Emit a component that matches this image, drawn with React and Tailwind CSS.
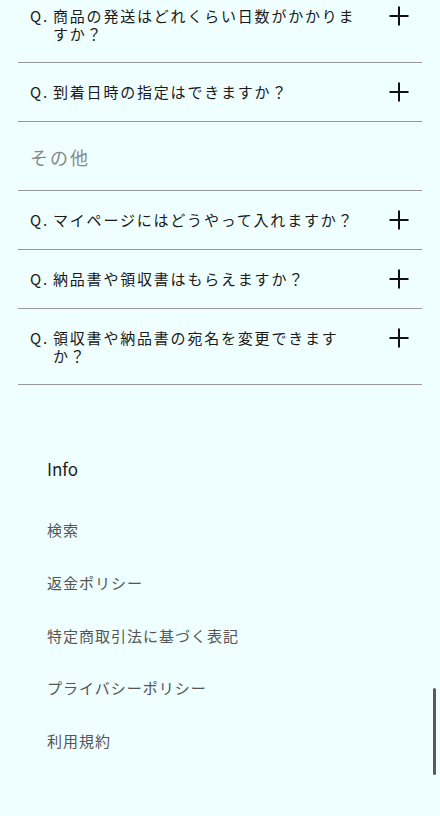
import React from 'react';

const jp = { fontFamily: '"Noto Sans CJK JP", "Noto Sans", sans-serif' };

const PlusIcon = () => (
  <svg width="20" height="20" viewBox="0 0 20 20" className="shrink-0 text-[#111]">
    <path d="M10 0.5V19.5M0.5 10H19.5" stroke="currentColor" strokeWidth="2" fill="none" />
  </svg>
);

const QuestionRow = ({ text }) => (
  <div className="flex items-start justify-between pl-[12px] pr-[13px] pt-[20px] pb-[19px] border-b border-[#999]">
    <div className="flex text-[15px] leading-[18px] tracking-[1.8px] text-[#1a1a1a]">
      <span className="w-[23px] shrink-0">Q.</span>
      <span className="w-[310px]">{text}</span>
    </div>
    <div className="-mt-[1px]">
      <PlusIcon />
    </div>
  </div>
);

const topQuestions = [
  '商品の発送はどれくらい日数がかかりますか？',
  '到着日時の指定はできますか？',
];

const otherQuestions = [
  'マイページにはどうやって入れますか？',
  '納品書や領収書はもらえますか？',
  '領収書や納品書の宛名を変更できますか？',
];

const infoLinks = ['検索', '返金ポリシー', '特定商取引法に基づく表記', 'プライバシーポリシー', '利用規約'];

export default function App() {
  return (
    <div className="relative h-[816px] overflow-hidden bg-[#effefe]" style={jp}>
      {/* FAQ list */}
      <div className="mx-[18px] -mt-[13px]">
        {topQuestions.map((q) => (
          <QuestionRow key={q} text={q} />
        ))}

        <div className="pl-[12px] pt-[23px] pb-[21px] border-b border-[#999]">
          <h3 className="text-[18px] leading-[24px] tracking-[2px] text-[#888]">その他</h3>
        </div>

        {otherQuestions.map((q) => (
          <QuestionRow key={q} text={q} />
        ))}
      </div>

      {/* Footer info */}
      <div className="pl-[47px] mt-[72px]">
        <h4 className="text-[17px] leading-[24px] text-[#222] mb-[23px]">Info</h4>
        <ul>
          {infoLinks.map((l) => (
            <li key={l} className="h-[52.75px] flex items-center text-[15px] tracking-[1px] text-[#555]">
              {l}
            </li>
          ))}
        </ul>
      </div>

      {/* overlay scrollbar */}
      <div className="absolute right-[4px] top-[688px] w-[3px] h-[87px] rounded-full bg-[#5a5a5a]" />
    </div>
  );
}
